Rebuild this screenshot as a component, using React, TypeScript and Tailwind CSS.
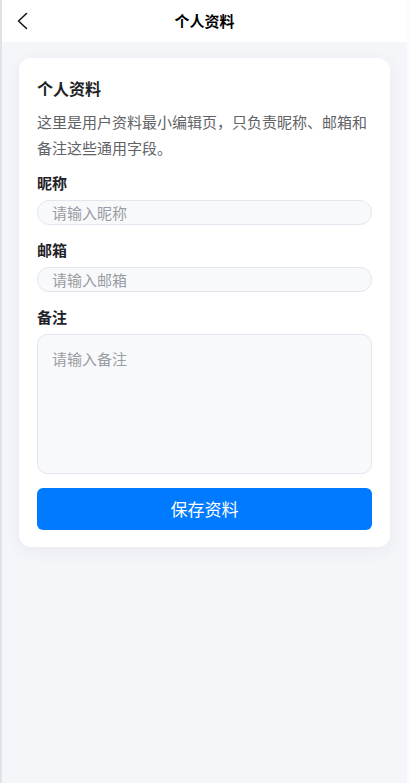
import { useState } from 'react'

export default function App() {
  const [nickname, setNickname] = useState('')
  const [email, setEmail] = useState('')
  const [note, setNote] = useState('')

  return (
    <div
      className="min-h-[783px] w-full flex border-l-2 border-[#dfe2e8] bg-[#f5f6fa]"
      style={{ fontFamily: '"Noto Sans CJK SC", "Noto Sans", sans-serif' }}
    >
      <div className="flex-1 flex flex-col">
        {/* top bar */}
        <header className="h-[42px] bg-white flex items-center relative">
          <button className="absolute left-[11px] top-[11px] w-[18px] h-[20px] flex items-center justify-center">
            <svg width="12" height="18" viewBox="0 0 12 18" fill="none">
              <path d="M10.5 1.5 2.5 9l8 7.5" stroke="#111" strokeWidth="1.5" strokeLinecap="round" strokeLinejoin="round" />
            </svg>
          </button>
          <h1 className="flex-1 text-center text-[15px] font-bold text-black leading-[42px]">个人资料</h1>
        </header>

        {/* profile card */}
        <div className="px-[17px] pt-4">
          <div className="bg-white rounded-[12px] px-[18px] pt-[18px] pb-[17px] shadow-[0_4px_18px_rgba(30,40,70,0.06)]">
            <h2 className="text-base leading-6 font-bold text-[#1c1f23]">个人资料</h2>
            <p className="mt-[9px] text-[15px] leading-[26px] text-[#606266]">
              这里是用户资料最小编辑页，只负责昵称、邮箱和备注这些通用字段。
            </p>

            <div className="mt-[11px] flex flex-col gap-[14px]">
              <label className="flex flex-col gap-[6px]">
                <span className="text-[15px] leading-[22px] font-bold text-[#1f2329]">昵称</span>
                <input
                  value={nickname}
                  onChange={(e) => setNickname(e.target.value)}
                  placeholder="请输入昵称"
                  className="h-[25px] w-full rounded-[12px] border border-[#e3e6ee] bg-[#f8f9fb] px-[14px] text-[15px] text-[#333] placeholder:text-[#9a9ca3] outline-none"
                />
              </label>

              <label className="flex flex-col gap-[6px]">
                <span className="text-[15px] leading-[22px] font-bold text-[#1f2329]">邮箱</span>
                <input
                  value={email}
                  onChange={(e) => setEmail(e.target.value)}
                  placeholder="请输入邮箱"
                  className="h-[25px] w-full rounded-[12px] border border-[#e3e6ee] bg-[#f8f9fb] px-[14px] text-[15px] text-[#333] placeholder:text-[#9a9ca3] outline-none"
                />
              </label>

              <label className="flex flex-col gap-[6px]">
                <span className="text-[15px] leading-[22px] font-bold text-[#1f2329]">备注</span>
                <textarea
                  value={note}
                  onChange={(e) => setNote(e.target.value)}
                  placeholder="请输入备注"
                  className="h-[140px] w-full resize-none rounded-[10px] border border-[#e3e6ee] bg-[#f8f9fb] px-[14px] py-[13px] text-[15px] leading-[22px] text-[#333] placeholder:text-[#9a9ca3] outline-none"
                />
              </label>
            </div>

            <button className="mt-[14px] h-[42px] w-full rounded-[6px] bg-[#007aff] text-[17px] text-white">
              保存资料
            </button>
          </div>
        </div>
      </div>
      <div className="w-[3px] bg-[#fafbfd]" />
    </div>
  )
}
